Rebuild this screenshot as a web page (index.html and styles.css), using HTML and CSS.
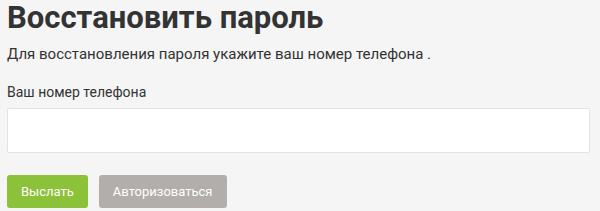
FILE: index.html
```html
<!DOCTYPE html>
<html lang="ru">
  <head>
    <meta charset="UTF-8" />
    <title>Восстановить пароль</title>
    <link rel="stylesheet" href="styles.css">
  </head>
  <body>
    <div class="recover">
      <h1>Восстановить пароль</h1>
      <p class="hint">Для восстановления пароля укажите ваш номер телефона .</p>

      <label class="field-label" for="phone">Ваш номер телефона</label>
      <input class="field-input" id="phone" type="text" />

      <div class="actions">
        <button class="btn btn-send">Выслать</button>
        <button class="btn btn-login">Авторизоваться</button>
      </div>
    </div>
  </body>
</html>
```

FILE: styles.css
```css
body {
  margin: 0;
  background-color: #f5f5f5;
  font-family: Roboto, "Liberation Sans", sans-serif;
  color: #333;
}

.recover {
  padding: 0 10px 0 7px;
}

h1 {
  margin: 0;
  font-size: 31px;
  line-height: 36px;
  font-weight: 700;
  color: #333;
}

.hint {
  margin: 8px 0 0;
  font-size: 15px;
  line-height: 20px;
}

.field-label {
  display: block;
  margin-top: 18px;
  font-size: 14px;
  line-height: 20px;
}

.field-input {
  display: block;
  box-sizing: border-box;
  width: 100%;
  height: 45px;
  margin-top: 6px;
  border: 1px solid #e3e3e3;
  border-radius: 2px;
  background-color: #fff;
}

.actions {
  display: flex;
  gap: 11px;
  margin-top: 22px;
}

.btn {
  height: 33px;
  padding: 0 14px;
  border: none;
  border-radius: 3px;
  font-family: inherit;
  font-size: 13px;
  color: #fff;
  cursor: pointer;
}

.btn-send {
  background-color: #8cc13a;
}

.btn-login {
  background-color: #b1aeac;
}
```
